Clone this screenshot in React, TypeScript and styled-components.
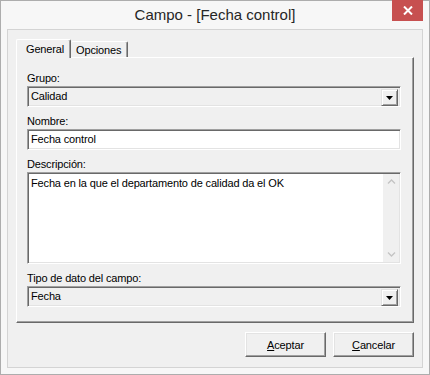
import React from 'react'
import styled, { createGlobalStyle } from 'styled-components'

const GlobalStyle = createGlobalStyle`
    html, body {
        margin: 0;
        padding: 0;
        background: #ffffff;
    }
    body {
        font-family: 'Liberation Sans', Arial, sans-serif;
        font-size: 11px;
        color: #000;
    }
`

const Window = styled.div`
    width: 430px;
    height: 375px;
    box-sizing: border-box;
    border: 1px solid #adadad;
    background: #f7f7f7;
    display: flex;
    flex-direction: column;
`

const TitleBar = styled.div`
    height: 29px;
    margin-top: -1px;
    display: grid;
    grid-template-columns: 1fr auto 1fr;
    align-items: start;
    padding-right: 6px;
`

const Title = styled.span`
    grid-column: 2;
    padding-top: 6px;
    padding-left: 6px;
    font-family: 'Liberation Sans', Arial, sans-serif;
    font-size: 15px;
    color: #262626;
    white-space: nowrap;
`

const CloseButton = styled.div`
    grid-column: 3;
    justify-self: end;
    width: 31px;
    height: 21px;
    background: #c75050;
    display: flex;
    align-items: center;
    justify-content: center;
`

const Client = styled.div`
    flex: 1;
    margin: 0 6px 6px;
    border: 1px solid #d4d4d4;
    background: #f0f0f0;
    padding: 9px 8px 0;
    display: flex;
    flex-direction: column;
`

const TabStrip = styled.div`
    display: flex;
    align-items: flex-end;
    height: 18px;
`

const Tab = styled.div<{ $active?: boolean }>`
    position: relative;
    z-index: ${(p) => (p.$active ? 2 : 1)};
    box-sizing: border-box;
    height: ${(p) => (p.$active ? '19px' : '16px')};
    margin-bottom: ${(p) => (p.$active ? '-1px' : '0')};
    padding: ${(p) => (p.$active ? '3px 6px 0 9px' : '2px 6px 0 5px')};
    background: #f0f0f0;
    border-top: 1px solid #ffffff;
    border-left: ${(p) => (p.$active ? '1px solid #ffffff' : 'none')};
    border-right: 1px solid #696969;
    box-shadow: inset -1px 0 0 #a0a0a0;
    border-radius: 2px 2px 0 0;
    white-space: nowrap;
    letter-spacing: -0.15px;
`

const Panel = styled.div`
    box-sizing: border-box;
    width: 398px;
    height: 266px;
    border-top: 1px solid #ffffff;
    border-left: 1px solid #ffffff;
    border-right: 1px solid #696969;
    border-bottom: 1px solid #696969;
    box-shadow: inset -1px -1px 0 #a0a0a0;
    padding: 13px 12px 0 10px;
    display: flex;
    flex-direction: column;
`

const Field = styled.div`
    display: flex;
    flex-direction: column;
    margin-bottom: 7px;
`

const Label = styled.label`
    height: 14px;
    line-height: 14px;
    margin-bottom: 1px;
    letter-spacing: -0.15px;
`

const Sunken = styled.div<{ $white?: boolean; $h: number }>`
    box-sizing: border-box;
    height: ${(p) => p.$h}px;
    border: 1px solid;
    border-color: #a0a0a0 #ffffff #ffffff #a0a0a0;
    box-shadow: inset 1px 1px 0 #696969, inset -1px -1px 0 #e3e3e3;
    background: ${(p) => (p.$white ? '#ffffff' : '#f0f0f0')};
    display: flex;
    padding: 2px 2px 2px 3px;
`

const FieldText = styled.span`
    flex: 1;
    line-height: 15px;
    letter-spacing: -0.15px;
    white-space: nowrap;
`

const DropButton = styled.div`
    box-sizing: border-box;
    width: 17px;
    height: 17px;
    border: 1px solid;
    border-color: #e3e3e3 #696969 #696969 #e3e3e3;
    box-shadow: inset 1px 1px 0 #ffffff, inset -1px -1px 0 #a0a0a0;
    background: #f0f0f0;
    display: flex;
    align-items: center;
    justify-content: center;
`

const MemoText = styled.div`
    flex: 1;
    padding-top: 1px;
    line-height: 14px;
    letter-spacing: -0.15px;
`

const ScrollBar = styled.div`
    width: 16px;
    margin: -1px -1px -1px 0;
    background: #f0f0f0;
    display: flex;
    flex-direction: column;
    justify-content: space-between;
    align-items: center;
    padding: 5px 0;
`

const ButtonRow = styled.div`
    display: flex;
    justify-content: flex-end;
    gap: 7px;
    width: 398px;
    margin-top: 9px;
`

const PushButton = styled.button`
    box-sizing: border-box;
    width: 81px;
    height: 25px;
    border: 1px solid;
    border-color: #ffffff #696969 #696969 #ffffff;
    box-shadow: inset -1px -1px 0 #a0a0a0, inset 1px 1px 0 #e3e3e3;
    background: #f0f0f0;
    font-family: 'Liberation Sans', Arial, sans-serif;
    font-size: 11px;
    letter-spacing: -0.15px;
    color: #000;
    padding: 0;
    u {
        text-decoration: underline;
    }
`

const Arrow = () => (
    <svg width="7" height="4" viewBox="0 0 7 4">
        <path d="M0 0H7L3.5 4Z" fill="#000" />
    </svg>
)

const Chevron = ({ up }: { up?: boolean }) => (
    <svg width="9" height="5" viewBox="0 0 9 5">
        <path
            d={up ? 'M1 4.5L4.5 1L8 4.5' : 'M1 0.5L4.5 4L8 0.5'}
            fill="none"
            stroke="#c4c4c4"
            strokeWidth="1.3"
        />
    </svg>
)

const Combo = ({ value }: { value: string }) => (
    <Sunken $h={21}>
        <FieldText>{value}</FieldText>
        <DropButton>
            <Arrow />
        </DropButton>
    </Sunken>
)

const App = () => {
    return (
        <>
            <GlobalStyle />
            <Window>
                <TitleBar>
                    <Title>Campo - [Fecha control]</Title>
                    <CloseButton>
                        <svg width="10" height="9" viewBox="0 0 10 9">
                            <path d="M1 0.5L9 8.5M9 0.5L1 8.5" stroke="#fff" strokeWidth="2" />
                        </svg>
                    </CloseButton>
                </TitleBar>
                <Client>
                    <TabStrip>
                        <Tab $active>General</Tab>
                        <Tab>Opciones</Tab>
                    </TabStrip>
                    <Panel>
                        <Field>
                            <Label>Grupo:</Label>
                            <Combo value="Calidad" />
                        </Field>
                        <Field>
                            <Label>Nombre:</Label>
                            <Sunken $white $h={21}>
                                <FieldText>Fecha control</FieldText>
                            </Sunken>
                        </Field>
                        <Field>
                            <Label>Descripción:</Label>
                            <Sunken $white $h={92}>
                                <MemoText>Fecha en la que el departamento de calidad da el OK</MemoText>
                                <ScrollBar>
                                    <Chevron up />
                                    <Chevron />
                                </ScrollBar>
                            </Sunken>
                        </Field>
                        <Field>
                            <Label>Tipo de dato del campo:</Label>
                            <Combo value="Fecha" />
                        </Field>
                    </Panel>
                    <ButtonRow>
                        <PushButton>
                            <u>A</u>ceptar
                        </PushButton>
                        <PushButton>
                            <u>C</u>ancelar
                        </PushButton>
                    </ButtonRow>
                </Client>
            </Window>
        </>
    )
}

export default App
